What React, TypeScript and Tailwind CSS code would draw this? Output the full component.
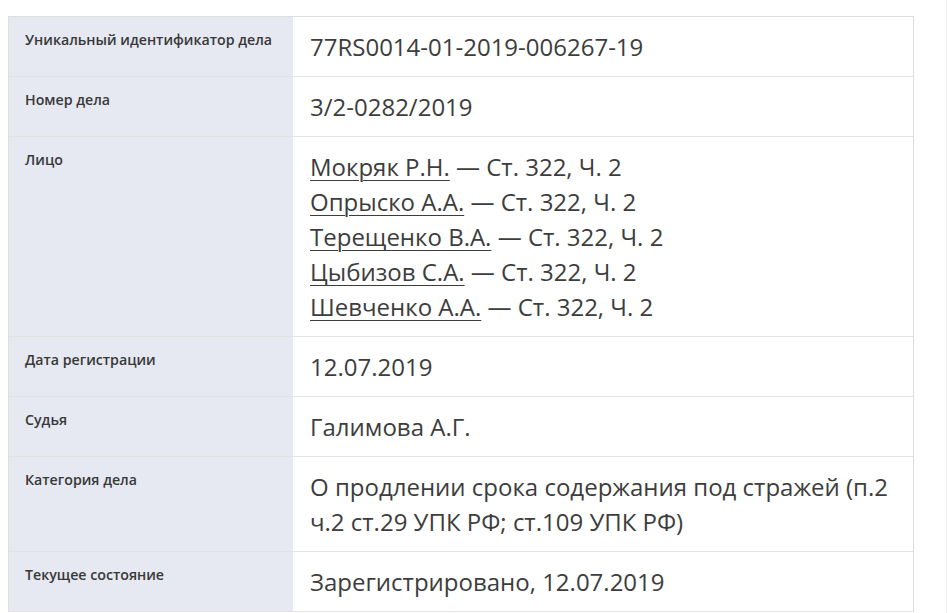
import React from "react";

type Row = {
  label: string;
  value: React.ReactNode;
};

const persons = [
  "Мокряк Р.Н.",
  "Опрыско А.А.",
  "Терещенко В.А.",
  "Цыбизов С.А.",
  "Шевченко А.А.",
];

const rows: Row[] = [
  { label: "Уникальный идентификатор дела", value: "77RS0014-01-2019-006267-19" },
  { label: "Номер дела", value: "3/2-0282/2019" },
  {
    label: "Лицо",
    value: (
      <div className="flex flex-col">
        {persons.map((p) => (
          <div key={p}>
            <a className="underline decoration-1 underline-offset-[4px] cursor-pointer">{p}</a>
            {" — Ст. 322, Ч. 2"}
          </div>
        ))}
      </div>
    ),
  },
  { label: "Дата регистрации", value: "12.07.2019" },
  { label: "Судья", value: "Галимова А.Г." },
  {
    label: "Категория дела",
    value: "О продлении срока содержания под стражей (п.2 ч.2 ст.29 УПК РФ; ст.109 УПК РФ)",
  },
  { label: "Текущее состояние", value: "Зарегистрировано, 12.07.2019" },
];

export default function App() {
  return (
    <div
      className="min-h-[613px] bg-white border-r border-[#eeeeee] pl-[8px] pt-[16px]"
      style={{ fontFamily: '"Open Sans", "Noto Sans", sans-serif' }}
    >
      <div className="w-[906px] border border-[#dedede] border-b-[#e4e4e4]">
        {rows.map((row, i) => (
          <div
            key={row.label}
            className={
              "flex " + (i > 0 ? "border-t border-[#e2e2e2]" : "")
            }
          >
            <div className="w-[284px] shrink-0 bg-[#e6e9f1] px-[16px] py-[12px] text-[14.2px] leading-[21px] font-semibold text-[#383838]">
              {row.label}
            </div>
            <div className="flex-1 px-[17px] py-[12px] text-[24px] leading-[35px] text-[#3d3d3d]">
              {row.value}
            </div>
          </div>
        ))}
      </div>
    </div>
  );
}
